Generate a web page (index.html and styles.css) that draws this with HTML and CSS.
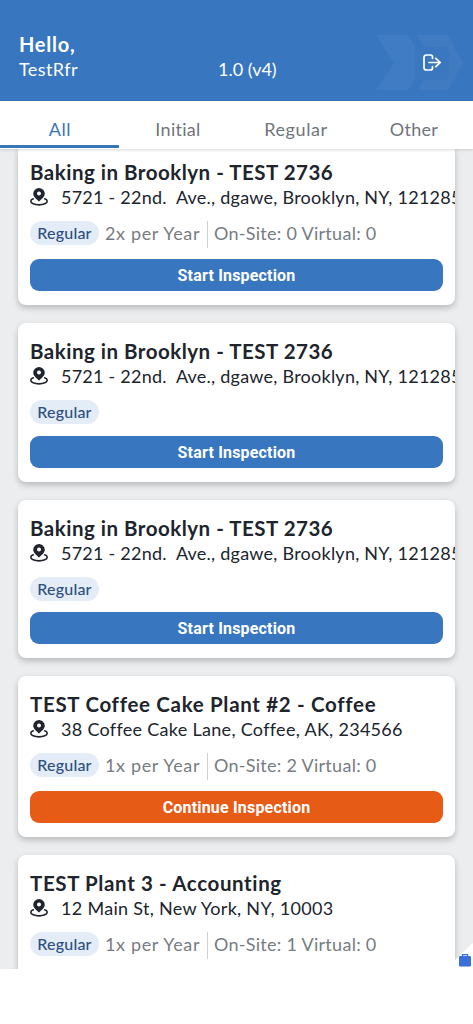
FILE: index.html
```
<!DOCTYPE html>
<html lang="en">
<head>
    <meta charset="UTF-8">
    <meta name="viewport" content="width=device-width, initial-scale=1.0">
    <title>Inspections</title>
    <link rel="stylesheet" href="styles.css">
</head>
<body>
    <svg class="symbols">
        <symbol id="pin" viewBox="0 0 18 18">
            <path d="M9 0a5.800 5.800 0 0 0-5.800 5.700c0 3 3.700 5.500 5.800 7.900 2.100-2.400 5.800-4.900 5.800-7.900A5.800 5.800 0 0 0 9 0zm0 3.500a2 2 0 1 1 0 4 2 2 0 0 1 0-4z" fill="#20242c" fill-rule="evenodd"/>
            <path d="M3.300 10.800C1.600 11.400.8 12.300.8 13.200.8 15.300 4.500 16.900 9 16.900s8.200-1.600 8.200-3.700c0-.9-.8-1.800-2.500-2.400" fill="none" stroke="#20242c" stroke-width="1.600" stroke-linecap="round"/>
        </symbol>
    </svg>

    <header class="header">
        <div class="user">
            <div class="hello">Hello,</div>
            <div class="name">TestRfr</div>
        </div>
        <div class="version">1.0 (v4)</div>
        <div class="logout">
            <svg width="88" height="56" viewBox="0 0 88 56">
                <path d="M0 0h32l17 28-17 27H0l18-27z" fill="#407cc3"/>
                <path d="M41 0h31l15 28-15 27H41l17-27z" fill="#407bc1"/>
                <rect x="39" y="12" width="34" height="33" rx="6" fill="#3a77be"/>
                <path d="M56.500 23.500v-1.500a2 2 0 0 0-2-2h-4a2.500 2.500 0 0 0-2.500 2.500v10a2.500 2.500 0 0 0 2.500 2.500h4a2 2 0 0 0 2-2v-1.500M53 27.500h11M59.800 23.300l4.500 4.200-4.500 4.200" fill="none" stroke="#fff" stroke-width="1.700" stroke-linecap="round" stroke-linejoin="round"/>
            </svg>
        </div>
    </header>

    <nav class="tabs">
        <div class="tab active">All</div>
        <div class="tab">Initial</div>
        <div class="tab regular">Regular</div>
        <div class="tab">Other</div>
    </nav>

    <main class="list">
        <div class="card">
            <h2>Baking in Brooklyn - TEST 2736</h2>
            <div class="address long"><svg><use href="#pin"/></svg><span>5721 - 22nd.&nbsp; Ave., dgawe, Brooklyn, NY, 121285</span></div>
            <div class="info visits">
                <span class="badge">Regular</span>
                <span class="freq">2x per Year</span>
                <span class="counts">On-Site: 0 Virtual: 0</span>
            </div>
            <button>Start Inspection</button>
        </div>
        <div class="card">
            <h2>Baking in Brooklyn - TEST 2736</h2>
            <div class="address long"><svg><use href="#pin"/></svg><span>5721 - 22nd.&nbsp; Ave., dgawe, Brooklyn, NY, 121285</span></div>
            <div class="info">
                <span class="badge">Regular</span>
            </div>
            <button>Start Inspection</button>
        </div>
        <div class="card">
            <h2>Baking in Brooklyn - TEST 2736</h2>
            <div class="address long"><svg><use href="#pin"/></svg><span>5721 - 22nd.&nbsp; Ave., dgawe, Brooklyn, NY, 121285</span></div>
            <div class="info">
                <span class="badge">Regular</span>
            </div>
            <button>Start Inspection</button>
        </div>
        <div class="card">
            <h2 class="coffee">TEST Coffee Cake Plant #2 - Coffee</h2>
            <div class="address"><svg><use href="#pin"/></svg><span>38 Coffee Cake Lane, Coffee, AK, 234566</span></div>
            <div class="info visits">
                <span class="badge">Regular</span>
                <span class="freq">1x per Year</span>
                <span class="counts">On-Site: 2 Virtual: 0</span>
            </div>
            <button class="continue">Continue Inspection</button>
        </div>
        <div class="card last">
            <h2 class="plant">TEST Plant 3 - Accounting</h2>
            <div class="address"><svg><use href="#pin"/></svg><span>12 Main St, New York, NY, 10003</span></div>
            <div class="info visits">
                <span class="badge">Regular</span>
                <span class="freq">1x per Year</span>
                <span class="counts">On-Site: 1 Virtual: 0</span>
            </div>
        </div>
        <div class="corner">
            <svg width="18" height="26" viewBox="0 0 18 26">
                <path d="M18 0v26H0V17z" fill="#fff"/>
                <path d="M7.500 13.500v-1.800h5v1.800" fill="none" stroke="#3b6fd8" stroke-width="1.300"/>
                <rect x="4" y="13" width="12" height="10.500" rx="1.200" fill="#3b6fd8"/>
            </svg>
        </div>
    </main>
</body>
</html>
```

FILE: styles.css
```
* {
    box-sizing: border-box;
}

body {
    margin: 0;
    height: 1024px;
    overflow: hidden;
    background: #fff;
    font-family: Lato, sans-serif;
    color: #20242c;
}

.symbols {
    display: none;
}

.header {
    display: grid;
    grid-template-columns: 199px 95px 1fr;
    height: 100.5px;
    padding: 32px 0 0 19px;
    background: #3876bf;
    color: #fff;
}

.hello {
    font-size: 20px;
    line-height: 25px;
    font-weight: bold;
    letter-spacing: 0.75px;
}

.name,
.version {
    font-size: 18px;
    line-height: 25px;
}

.name {
    letter-spacing: 0.4px;
}

.version {
    padding-top: 25px;
}

.logout {
    padding: 3px 0 0 63px;
}

.tabs {
    display: flex;
    position: relative;
    z-index: 1;
    height: 48.5px;
    background: #fff;
    box-shadow: 0 1px 3px rgba(0, 0, 0, 0.15);
}

.tab {
    flex: 1;
    height: 47px;
    padding-top: 5px;
    border-bottom: 3px solid transparent;
    text-align: center;
    font-size: 18px;
    line-height: 47px;
    letter-spacing: 0.3px;
    color: #70757c;
}

.tab.regular {
    letter-spacing: 0.6px;
}

.tab.active {
    padding-left: 1px;
    color: #3a76b5;
    border-color: #3876b5;
    letter-spacing: 0.6px;
}

.list {
    position: relative;
    height: 820px;
    padding: 0 18px;
    overflow: hidden;
    background: #ebedef;
}

.card {
    margin-bottom: 18px;
    padding: 15px 12px 14px;
    border-radius: 8px;
    background: #fff;
    overflow: hidden;
    box-shadow: 0 3px 6px rgba(0, 0, 0, 0.22);
}

.card:first-child {
    margin-top: -4.6px;
}

.card.last {
    height: 161px;
}

.card h2 {
    margin: 0;
    font-size: 20.5px;
    line-height: 26px;
    font-weight: bold;
    letter-spacing: 0.5px;
    white-space: nowrap;
}

.card h2.coffee {
    letter-spacing: 0.68px;
}

.card h2.plant {
    letter-spacing: 0.62px;
}

.address {
    display: flex;
    align-items: center;
    gap: 13px;
    height: 24px;
    font-size: 18px;
    letter-spacing: 0.3px;
    white-space: nowrap;
}

.address.long {
    letter-spacing: 0.24px;
}

.address svg {
    flex: none;
    width: 18px;
    height: 18px;
}

.info {
    display: flex;
    align-items: flex-start;
    height: 24px;
    margin: 12px 0 11.4px;
    font-size: 18px;
    line-height: 24px;
    color: #777c82;
}

.visits {
    height: 26.4px;
}

.badge {
    width: 69px;
    height: 24px;
    border-radius: 12px;
    background: #e4ecf7;
    color: #2c4f7e;
    font-size: 16px;
    font-weight: 500;
    line-height: 24px;
    letter-spacing: 0.2px;
    text-align: center;
}

.freq {
    width: 109px;
    margin-left: 6px;
    letter-spacing: 0.65px;
}

.counts {
    height: 27px;
    margin-left: -7px;
    padding-left: 6px;
    border-left: 1px solid #ced1d4;
    letter-spacing: 0.28px;
}

button {
    display: block;
    width: 100%;
    height: 32px;
    padding: 1px 0 0;
    border: 0;
    border-radius: 9px;
    background: #3876bf;
    color: #fff;
    font-family: Roboto, sans-serif;
    font-size: 16px;
    font-weight: bold;
    letter-spacing: 0.18px;
}

.continue {
    background: #e65b16;
}

.corner {
    position: absolute;
    right: 0;
    bottom: 0;
    height: 26px;
}
```
